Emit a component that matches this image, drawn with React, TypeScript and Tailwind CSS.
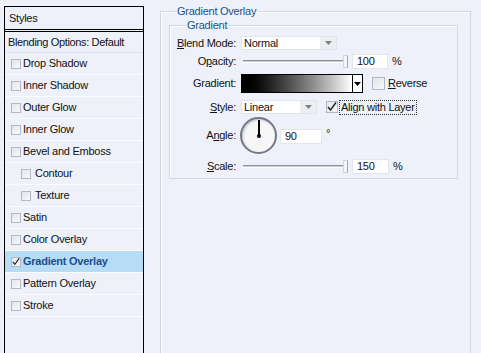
import React from "react";

const styleRows = [
  { label: "Drop Shadow" },
  { label: "Inner Shadow" },
  { label: "Outer Glow" },
  { label: "Inner Glow" },
  { label: "Bevel and Emboss" },
  { label: "Contour", sub: true },
  { label: "Texture", sub: true },
  { label: "Satin" },
  { label: "Color Overlay" },
  { label: "Gradient Overlay", active: true },
  { label: "Pattern Overlay" },
  { label: "Stroke" },
];

function CheckBox({ checked = false, size = "w-[10px] h-[10px]" }: { checked?: boolean; size?: string }) {
  return (
    <div
      className={`${size} shrink-0 border border-[#b3b8c2] bg-gradient-to-br from-[#e2e5ea] to-[#f7f8fa] flex items-center justify-center`}
    >
      {checked && (
        <svg width="10" height="9" viewBox="0 0 10 9" className="-mt-[1px]">
          <path d="M1 5 L3.5 8 L9 0.5" stroke="#1f1f1f" strokeWidth="1.4" fill="none" />
        </svg>
      )}
    </div>
  );
}

function Arrow({ color = "#7b808a" }: { color?: string }) {
  return (
    <svg width="7" height="4" viewBox="0 0 7 4">
      <path d="M0 0 L7 0 L3.5 4 Z" fill={color} />
    </svg>
  );
}

function Select({ value, width }: { value: string; width: string }) {
  return (
    <div className={`${width} h-[14px] bg-white border border-[#e1e4ea] flex items-center`}>
      <span className="flex-1 pl-[2px] leading-none">{value}</span>
      <div className="w-[16px] h-full bg-[#eceef2] flex items-center justify-center">
        <Arrow />
      </div>
    </div>
  );
}

function Slider() {
  return (
    <div className="w-[107px] h-[16px] pl-[2px] flex items-center">
      <div className="flex-1 h-[3px] border-t border-[#8c919b] border-b border-b-white bg-[#c9cdd4]" />
      <div className="w-[5px] h-[13px] border border-[#d3d6dc] border-r-[#a4a8b0] bg-[#f4f5f8]" />
    </div>
  );
}

function NumField({ value, width }: { value: string; width: string }) {
  return (
    <div className={`${width} h-[15px] bg-white border border-[#e2e5eb] flex items-center pl-[4px] leading-none`}>
      {value}
    </div>
  );
}

function Label({ children }: { children: React.ReactNode }) {
  return <div className="w-[66px] shrink-0 text-right leading-none">{children}</div>;
}

export default function App() {
  return (
    <div className="w-[481px] h-[353px] overflow-hidden bg-[#eef1f9] flex font-['Liberation_Sans',Arial,sans-serif] text-[11px] tracking-[-0.25px] text-[#111]">
      {/* Styles list */}
      <div className="ml-[4px] mt-[6px] w-[140px] h-[360px] shrink-0 border border-black border-b-0 flex flex-col">
        <div className="h-[25px] border-b-[3px] border-double border-black flex items-center pl-[4px]">Styles</div>
        <div className="h-[21px] border-b border-[#dde2ec] flex items-center pl-[3px] tracking-[-0.35px]">
          Blending Options: Default
        </div>
        {styleRows.map((row) => (
          <div
            key={row.label}
            className={`h-[22px] border-b border-[#fbfcfe] flex items-center ${row.sub ? "pl-[16px] gap-[4px]" : "pl-[6px] gap-[2px]"} ${
              row.active ? "bg-[#b7dcf6] font-bold text-[#1b4d8e]" : ""
            }`}
          >
            <CheckBox checked={row.active} />
            <span>{row.label}</span>
          </div>
        ))}
      </div>

      {/* Settings */}
      <div className="pl-[16px]">
        <fieldset className="mt-[5px] w-[311px] h-[360px] border border-[#d3d7df] shadow-[inset_1px_1px_0_#fbfcfe]">
          <legend className="ml-[15px] px-[1px] leading-[13px] text-[#21508c]">Gradient Overlay</legend>
          <fieldset className="ml-[8px] mt-[1px] w-[289px] border border-[#d3d7df] shadow-[inset_1px_1px_0_#fbfcfe] pb-[4px]">
            <legend className="ml-[16px] px-[1px] leading-[13px] text-[#21508c]">Gradient</legend>

            <div className="mt-[3px] h-[16px] flex items-center">
              <Label>
                <u>B</u>lend Mode:
              </Label>
              <div className="ml-[5px]">
                <Select value="Normal" width="w-[96px]" />
              </div>
            </div>

            <div className="mt-[2px] h-[16px] flex items-center">
              <Label>
                O<u>p</u>acity:
              </Label>
              <div className="ml-[5px] flex items-center">
                <Slider />
                <div className="ml-[4px]">
                  <NumField value="100" width="w-[36px]" />
                </div>
                <span className="ml-[4px] leading-none">%</span>
              </div>
            </div>

            <div className="mt-[5px] h-[19px] flex items-center">
              <Label>Gradient:</Label>
              <div className="ml-[5px] flex items-center">
                <div className="w-[122px] h-[19px] border border-black flex">
                  <div className="flex-1 bg-gradient-to-r from-black to-white" />
                  <div className="w-[10px] border-l border-black bg-white flex items-center justify-center">
                    <Arrow color="#000" />
                  </div>
                </div>
                <div className="ml-[9px]">
                  <CheckBox size="w-[13px] h-[13px]" />
                </div>
                <span className="ml-[3px] leading-none">
                  <u>R</u>everse
                </span>
              </div>
            </div>

            <div className="mt-[6px] h-[16px] flex items-center">
              <Label>
                <u>S</u>tyle:
              </Label>
              <div className="ml-[5px] flex items-center">
                <Select value="Linear" width="w-[76px]" />
                <div className="ml-[9px]">
                  <CheckBox checked size="w-[12px] h-[12px]" />
                </div>
                <span className="ml-[1px] px-[1px] py-[1px] border border-dotted border-[#333] leading-none">
                  Align with Layer
                </span>
              </div>
            </div>

            <div className="mt-[1px] h-[38px] flex items-center">
              <Label>
                A<u>n</u>gle:
              </Label>
              <div className="ml-[4px] flex items-center">
                <div className="w-[37px] h-[37px] rounded-full border-2 border-[#737985] bg-[#f6f6f8] shadow-[inset_1px_1px_2px_#b9bdc6] flex justify-center">
                  <div className="flex flex-col items-center mt-[1px]">
                    <div className="w-[2px] h-[16px] bg-black" />
                    <div className="w-[4px] h-[4px] -mt-[2px] rounded-full bg-black" />
                  </div>
                </div>
                <div className="ml-[3px] mt-[3px]">
                  <NumField value="90" width="w-[42px]" />
                </div>
                <span className="ml-[4px] self-start mt-[11px] leading-none">°</span>
              </div>
            </div>

            <div className="mt-[4px] h-[16px] flex items-center">
              <Label>
                <u>S</u>cale:
              </Label>
              <div className="ml-[5px] flex items-center">
                <Slider />
                <div className="ml-[4px]">
                  <NumField value="150" width="w-[37px]" />
                </div>
                <span className="ml-[4px] leading-none">%</span>
              </div>
            </div>
          </fieldset>
        </fieldset>
      </div>
    </div>
  );
}
